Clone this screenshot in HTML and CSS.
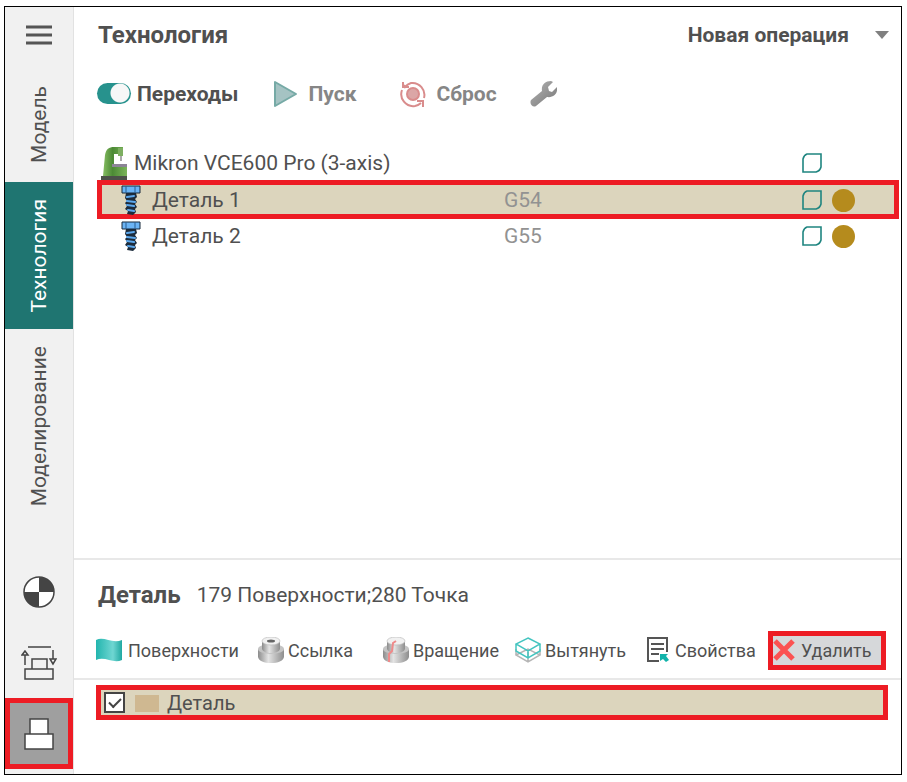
FILE: index.html
```html
<!DOCTYPE html>
<html lang="ru">
<head>
  <meta charset="UTF-8" />
  <meta name="viewport" content="width=device-width, initial-scale=1.0" />
  <title>Технология</title>
  <link rel="stylesheet" href="styles.css">
</head>
<body>
  <!-- Общие иконки -->
  <svg class="sprite" aria-hidden="true">
    <symbol id="bolt" viewBox="0 0 20 30">
      <path d="M5 8h10l1 4-2 2 2 3-2 2 2 3-2 2 1 3-3 3-6-1 1-3-3-2 2-3-2-3 2-2-2-3z" fill="#1d2c3c" />
      <path d="M6 12l7-1M6 16l8 1M6 20l7 1M7 25l6 1" stroke="#5da9ee" stroke-width="2" stroke-linecap="round" />
      <path d="M1 1h18v7H1z" fill="#6bb4f5" stroke="#17293b" />
      <path d="M5 1v7M14 1v7" stroke="#2a5f92" />
    </symbol>
    <symbol id="stock" viewBox="0 0 20 20">
      <path d="M5 1h14v13q-1 4-5 5H1V6q1-4 4-5z" fill="none" stroke="#1f8580" stroke-width="1.6" />
    </symbol>
    <symbol id="part3d" viewBox="0 0 26 26">
      <path d="M0 12v8c1 4 6 6 13 6s12-2 13-6v-8z" fill="url(#metal)" />
      <ellipse cx="13" cy="12" rx="13" ry="5" fill="#c4c4c4" />
      <path d="M4 5v7c1 3 5 4 9 4s8-1 9-4V5z" fill="url(#metal)" />
      <ellipse cx="13" cy="4" rx="9" ry="4" fill="#f1f1f1" stroke="#bbb" stroke-width=".7" />
    </symbol>
    <linearGradient id="metal">
      <stop offset="0" stop-color="#8b8b8b" />
      <stop offset=".4" stop-color="#e4e4e4" />
      <stop offset="1" stop-color="#8e8e8e" />
    </linearGradient>
    <linearGradient id="flag">
      <stop offset="0" stop-color="#22b5ae" />
      <stop offset=".65" stop-color="#6fd6d2" />
      <stop offset="1" stop-color="#20a8a1" />
    </linearGradient>
    <linearGradient id="green">
      <stop offset="0" stop-color="#86bd62" />
      <stop offset=".4" stop-color="#4c8a35" />
      <stop offset="1" stop-color="#7cb55a" />
    </linearGradient>
    <linearGradient id="steel" x1="0" y1="0" x2="1" y2="1">
      <stop offset="0" stop-color="#b4b4b4" />
      <stop offset="1" stop-color="#777" />
    </linearGradient>
  </svg>

  <div class="window">
    <nav class="sidebar">
      <button class="menu-btn" aria-label="Меню">
        <svg width="28" height="20"><path d="M1 2h26M1 10h26M1 18h26" stroke="#555" stroke-width="3" /></svg>
      </button>
      <button class="tab tab-model"><span>Модель</span></button>
      <button class="tab tab-tech active"><span>Технология</span></button>
      <button class="tab tab-sim"><span>Моделирование</span></button>

      <div class="tools">
        <button class="tool" aria-label="Система координат">
          <svg width="32" height="32">
            <circle cx="16" cy="16" r="15" fill="#fff" stroke="#444" stroke-width="1.5" />
            <path d="M16 16V1a15 15 0 0 1 15 15zM16 16v15A15 15 0 0 1 1 16z" fill="#444" />
          </svg>
        </button>
        <button class="tool" aria-label="Заготовка">
          <svg width="36" height="34" fill="none" stroke="#444" stroke-width="1.5">
            <path d="M7 1h23M11 23V13h15v10M4 23h28v10H4zM4 19V9M32 4v9" />
            <path d="M4 5L1 9h6zM32 18l-3-5h6z" />
          </svg>
        </button>
        <button class="tool selected" aria-label="Деталь">
          <svg width="30" height="32" fill="#fff" stroke="#444" stroke-width="1.5">
            <path d="M6 16V1h18v15M1 16h28v15H1z" />
          </svg>
        </button>
      </div>
    </nav>

    <main>
      <section class="operations">
        <header class="top">
          <h1>Технология</h1>
          <button class="new-op">Новая операция
            <svg width="14" height="8"><path d="M0 0h14L7 8z" fill="#808080" /></svg>
          </button>
        </header>

        <div class="toolbar">
          <label class="switch"><input type="checkbox" checked />Переходы</label>
          <button class="run">
            <svg width="24" height="28"><path d="M1 2v24L22 14z" fill="#a5c3c3" stroke="#76aaa6" stroke-width="2" stroke-linejoin="round" /></svg>
            Пуск
          </button>
          <button class="reset">
            <svg width="26" height="28" fill="none" stroke="#d98c8c" stroke-width="2">
              <circle cx="13" cy="14" r="6" fill="#dba6a6" />
              <path d="M4 5l1 2a12 12 0 0 1 6-4a12 12 0 0 1 13 15M2 10a12 12 0 0 0 13 16a12 12 0 0 0 6-3" />
              <path d="M3 2v5h6M17 21h6v6" />
            </svg>
            Сброс
          </button>
          <button class="settings" aria-label="Настройки">
            <svg width="28" height="28">
              <path d="M2 20L13 11C12 5 16 1 22 1l2 1-5 5 1 4 3 1 5-5c1 6-3 11-10 10L7 26c-3 2-7-2-5-6z" fill="url(#steel)" />
            </svg>
          </button>
        </div>

        <ul class="tree">
          <li class="machine">
            <svg class="mill" width="28" height="34">
              <path d="M2 30L4 9c1-6 4-8 9-8h9v8h-8v12h12v9z" fill="url(#green)" />
              <path d="M13 8h4v11h-4z" fill="#fff" />
              <path d="M17 2h5v8h-5z" fill="#7daf61" />
              <path d="M19 10h2v5h-2z" fill="#aaa" />
              <path d="M11 18h15v3H11z" fill="#8c8496" />
              <path d="M0 30h26v4H0z" fill="#4c5149" />
            </svg>
            <span class="name">Mikron VCE600 Pro (3-axis)</span>
            <svg class="stock" width="20" height="20"><use href="#stock" /></svg>
          </li>
          <li class="selected">
            <svg width="20" height="30"><use href="#bolt" /></svg>
            <span class="name">Деталь 1</span>
            <span class="offset">G54</span>
            <svg class="stock" width="20" height="20"><use href="#stock" /></svg>
            <i class="dot"></i>
          </li>
          <li>
            <svg width="20" height="30"><use href="#bolt" /></svg>
            <span class="name">Деталь 2</span>
            <span class="offset">G55</span>
            <svg class="stock" width="20" height="20"><use href="#stock" /></svg>
            <i class="dot"></i>
          </li>
        </ul>
      </section>

      <section class="part">
        <header class="part-head">
          <h2>Деталь</h2>
          <span>179 Поверхности;280 Точка</span>
        </header>

        <div class="actions">
          <button class="surfaces">
            <svg width="26" height="24"><path d="M0 2c8-4 16 4 26 0v20c-9 4-17-4-26 0z" fill="url(#flag)" /></svg>
            Поверхности
          </button>
          <button>
            <svg width="26" height="26">
              <use href="#part3d" />
              <ellipse cx="13" cy="4" rx="4" ry="1.5" fill="#666" />
            </svg>
            Ссылка
          </button>
          <button>
            <svg width="26" height="26">
              <use href="#part3d" />
              <path d="M13 4l-3 2-1 8-3 3v8" fill="none" stroke="#ef8a8a" stroke-width="2" />
            </svg>
            Вращение
          </button>
          <button>
            <svg width="26" height="26" fill="none" stroke-width="1.5">
              <path d="M1 18l12-6 12 6-12 7zM1 12v6M25 12v6M13 15v10" stroke="#b5b5b5" />
              <path d="M13 1l12 6-12 7L1 7zM1 7v7l12 7 12-7V7M13 14v7" stroke="#45c5c0" />
            </svg>
            Вытянуть
          </button>
          <button class="props">
            <svg width="22" height="26" fill="none">
              <path d="M20 15V1H1v23h11M4 7h13M4 12h13M4 17h8" stroke="#555" stroke-width="2" />
              <path d="M13 17h8l-2 2 3 4-3 2-3-3-3 2z" fill="#12b3aa" />
            </svg>
            Свойства
          </button>
          <button class="delete">
            <svg width="22" height="22"><path d="M2 2l18 18M20 2L2 20" stroke="#fb5252" stroke-width="5" /></svg>
            Удалить
          </button>
        </div>

        <div class="items">
          <label class="item">
            <input type="checkbox" checked />
            <i class="swatch"></i>
            Деталь
          </label>
        </div>
      </section>
    </main>
  </div>
</body>
</html>
```
FILE: styles.css
```css
* {
  box-sizing: border-box;
  margin: 0;
  padding: 0;
}

body {
  background-color: #fff;
  color: #505050;
  font-family: Roboto, sans-serif;
  font-size: 21px;
  padding: 6px 5px 7px 4px;
}

button {
  background: none;
  border: none;
  color: inherit;
  font: inherit;
  white-space: nowrap;
}

svg {
  display: block;
  flex-shrink: 0;
}

.sprite {
  position: absolute;
  width: 0;
  height: 0;
}

.window {
  display: flex;
  min-height: calc(100vh - 13px);
  border: 1px solid #000;
}

/* Боковая панель */
.sidebar {
  display: flex;
  flex-direction: column;
  width: 69px;
  flex-shrink: 0;
  background-color: #f1f1f1;
  border-right: 1px solid #e2e2e2;
}

.menu-btn {
  display: flex;
  justify-content: center;
  padding: 18px 0;
}

.tab {
  display: flex;
  align-items: center;
  justify-content: center;
}

.tab span {
  writing-mode: vertical-rl;
  transform: rotate(180deg);
}

.tab-model {
  height: 119px;
  padding-top: 4px;
}

.tab-tech {
  height: 147px;
}

.tab-sim {
  height: 194px;
}

.tab.active {
  background-color: #1f7571;
  color: #fff;
}

.tools {
  margin-top: auto;
  padding-bottom: 5px;
}

.tool {
  display: flex;
  align-items: center;
  justify-content: center;
  width: 100%;
  height: 71px;
}

.tool.selected {
  background-color: #9f9f9f;
  border: 5px solid #ed1c24;
}

/* Основная область */
main {
  display: flex;
  flex-direction: column;
  flex: 1;
  min-width: 0;
}

.operations {
  flex: 1;
}

.top {
  display: flex;
  align-items: center;
  justify-content: space-between;
  height: 56px;
  padding: 0 12px 0 24px;
}

h1, h2 {
  font-size: 24px;
  font-weight: 700;
}

.new-op {
  display: flex;
  align-items: center;
  gap: 26px;
  font-weight: 700;
}

.toolbar {
  display: flex;
  align-items: center;
  height: 61px;
  padding-left: 23px;
  font-weight: 700;
}

.toolbar button {
  display: flex;
  align-items: center;
  gap: 10px;
  color: #868686;
}

.switch {
  display: flex;
  align-items: center;
  gap: 6px;
}

.switch input {
  appearance: none;
  width: 34px;
  height: 21px;
  border-radius: 12px;
  background: radial-gradient(circle at 23px 10px, #f7f7f7 9px, #27928d 10px);
}

.toolbar .run {
  margin-left: 36px;
}

.toolbar .reset {
  margin-left: 44px;
}

.toolbar .settings {
  margin-left: 32px;
}

.tree {
  list-style: none;
  padding: 21px 2px 0 23px;
}

.tree li {
  display: grid;
  grid-template-columns: 20px 1fr 298px 30px 62px;
  align-items: center;
  height: 34px;
  padding: 0 5px 0 24px;
}

.tree li.machine {
  grid-template-columns: 28px 1fr 30px 62px;
  padding-left: 4px;
  height: 35px;
}

.tree .mill {
  align-self: end;
}

.tree .name {
  padding-left: 11px;
}

.tree .machine .name {
  padding-left: 5px;
}

.tree li.selected {
  height: 39px;
  padding: 0 0 0 19px;
  background-color: #dcd5bd;
  border: 5px solid #ed1c24;
}

.offset {
  color: #929292;
}

.dot {
  width: 23px;
  height: 23px;
  border-radius: 50%;
  background-color: #b58b1d;
}

/* Нижняя панель */
.part {
  height: 216px;
  border-top: 2px solid #e8e8e8;
}

.part-head {
  display: flex;
  align-items: center;
  gap: 16px;
  height: 70px;
  padding-left: 24px;
}

.actions {
  display: grid;
  grid-template-columns: 162fr 125fr 132fr 132fr 121fr 118fr;
  align-items: center;
  height: 50px;
  padding: 0 15px 8px 22px;
  border-bottom: 2px solid #e8e8e8;
  font-size: 18px;
}

.actions button {
  display: flex;
  align-items: center;
  gap: 4px;
}

.actions .surfaces,
.actions .props {
  gap: 6px;
}

.actions .delete {
  height: 39px;
  gap: 6px;
  background-color: #d6d8da;
  border: 5px solid #ed1c24;
}

.items {
  padding: 5px 13px 0 22px;
}

.item {
  display: flex;
  align-items: center;
  height: 35px;
  padding-left: 3px;
  background-color: #dcd5bd;
  border: 5px solid #ed1c24;
  font-size: 20px;
}

.item input {
  appearance: none;
  width: 21px;
  height: 21px;
  border: 2px solid #444;
  background-color: #fff;
}

.item input:checked::before {
  content: "";
  display: block;
  width: 10px;
  height: 5px;
  margin: 4px 0 0 3px;
  border-left: 2px solid #444;
  border-bottom: 2px solid #444;
  transform: rotate(-45deg);
}

.swatch {
  width: 24px;
  height: 17px;
  margin: 2px 8px 0 10px;
  background-color: #cfb891;
}
```
